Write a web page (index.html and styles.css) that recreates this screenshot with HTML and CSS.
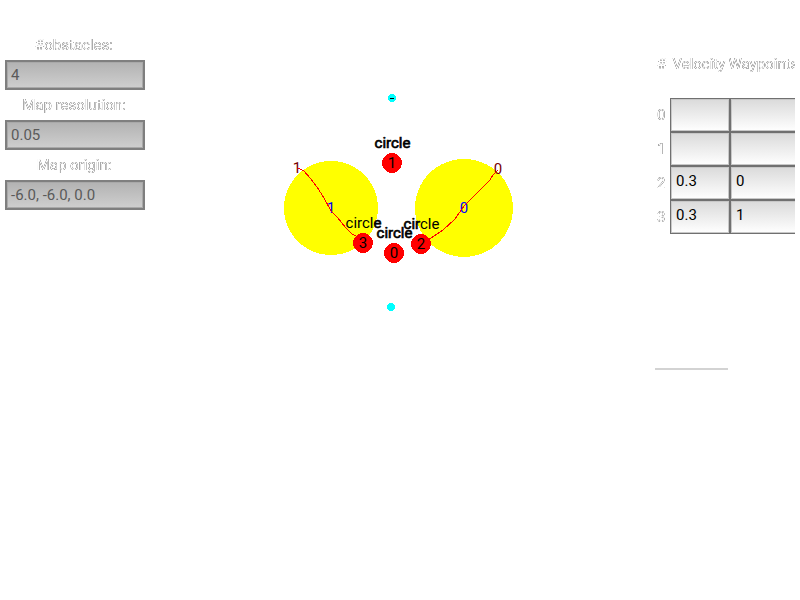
FILE: index.html
```html
<!DOCTYPE html>
<html lang="en">
<head>
<meta charset="utf-8">
<title>Map editor</title>
<link rel="stylesheet" href="styles.css">
</head>
<body>
<svg class="defs" width="0" height="0" aria-hidden="true">
  <filter id="edge" x="0" y="0" width="100%" height="100%" color-interpolation-filters="sRGB">
    <feComponentTransfer><feFuncA type="table" tableValues="0 .6 .85 .65 0"/></feComponentTransfer>
  </filter>
</svg>
<main class="app">
  <section class="settings">
    <div class="label">#obstacles:</div>
    <div class="field">4</div>
    <div class="label">Map resolution:</div>
    <div class="field">0.05</div>
    <div class="label">Map origin:</div>
    <div class="field">-6.0, -6.0, 0.0</div>
  </section>
  <svg class="map" width="510" height="600" viewBox="145 0 510 600">
    <g shape-rendering="crispEdges">
      <circle class="zone" cx="331" cy="208" r="47"/>
      <circle class="zone" cx="464" cy="208" r="49"/>
      <circle class="point" cx="392" cy="98" r="4"/>
      <circle class="point" cx="391" cy="307" r="4"/>
      <rect x="390" y="98" width="4" height="1"/>
    </g>
    <g class="center">
      <text x="331" y="213">1</text>
      <text x="464" y="213">0</text>
    </g>
    <g class="end">
      <text x="297" y="173">1</text>
      <text x="498" y="174">0</text>
    </g>
    <g class="path" shape-rendering="crispEdges">
      <path d="M298 168 L304 171 L310 178 L317 187 L324 198 L331 211 L337 217 L346 228 L352 234 L363 240"/>
      <path d="M498 170 L493 175 L490 180 L480 190 L464 206 L455 219 L443 230 L431 238 L421 244"/>
    </g>
    <g class="obstacle" shape-rendering="crispEdges">
      <circle cx="392" cy="163" r="10"/>
      <circle cx="394" cy="253" r="10"/>
      <circle cx="421" cy="244" r="10"/>
      <circle cx="363" cy="243" r="10"/>
    </g>
    <g class="name">
      <text x="392" y="168">1</text>
      <text x="394" y="258">0</text>
      <text x="421" y="249">2</text>
      <text x="363" y="248">3</text>
      <text class="strong" x="392.5" y="148">circle</text>
      <text class="strong" x="394.5" y="238">circle</text>
      <text x="421.5" y="229"><tspan class="strong">cir</tspan>cle</text>
      <text x="363.5" y="228">circl<tspan class="strong">e</tspan></text>
    </g>
  </svg>
  <section class="waypoints">
    <div class="heading"># &nbsp;Velocity Waypoints</div>
    <div class="grid">
      <div class="index">0</div><div class="cell"></div><div class="cell"></div>
      <div class="index">1</div><div class="cell"></div><div class="cell"></div>
      <div class="index">2</div><div class="cell">0.3</div><div class="cell">0</div>
      <div class="index">3</div><div class="cell">0.3</div><div class="cell">1</div>
    </div>
    <div class="rule"></div>
  </section>
</main>
</body>
</html>
```
FILE: styles.css
```css
* { box-sizing: border-box; }
body {
  margin: 0;
  background: #fff;
  font: 15px/30px Roboto, sans-serif;
  overflow: hidden;
}
.defs { position: absolute; }
.app {
  display: grid;
  grid-template-columns: 140px 510px 140px;
  width: 800px;
  height: 600px;
  padding: 0 5px;
}
.settings { padding-top: 30px; }
.label, .heading, .index {
  color: #999;
  filter: url(#edge);
}
.label { height: 30px; padding-right: 2px; text-align: center; }
.field {
  height: 30px;
  padding-left: 4px;
  border: 2px solid #7f7f7f;
  box-shadow: inset 0 0 0 1px #a9a9a9;
  background: linear-gradient(#b2b2b2, #cfcfcf);
  color: #5a5a5a;
  line-height: 27px;
}
.map { display: block; }
.zone { fill: #ff0; }
.point { fill: #0ff; }
.map text { font-size: 15px; text-anchor: middle; }
.center { fill: #00f; }
.end { fill: #700; }
.path { fill: none; stroke: #f00; stroke-width: 1; }
.obstacle { fill: #f00; }
.name { fill: #000; }
.strong { stroke: #000; stroke-width: .65px; }
.waypoints { padding-top: 49px; overflow: hidden; }
.heading { height: 30px; width: 160px; padding-left: 2px; white-space: nowrap; word-spacing: -.6px; }
.grid {
  display: grid;
  grid-template-columns: 15px 60px 80px;
  grid-auto-rows: 34px;
  width: 155px;
  margin-top: 19px;
}
.index { padding-left: 2px; line-height: 34px; }
.cell {
  padding-left: 5px;
  border: 1px solid #707070;
  box-shadow: inset 0 0 0 1px #c8c8c8;
  background: linear-gradient(#dadada, #fff);
  color: #000;
  line-height: 28px;
}
.rule { width: 73px; height: 2px; margin-top: 134px; background: #d3d3d3; }
```
